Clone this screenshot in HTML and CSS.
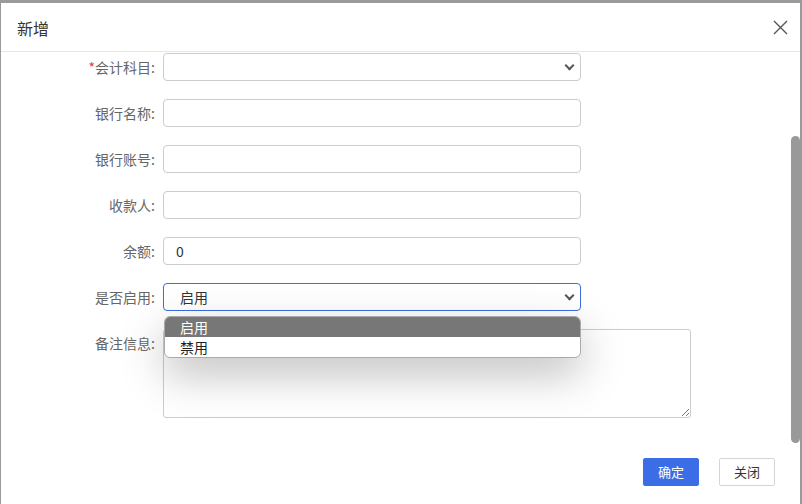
FILE: index.html
```html
<html>
<head>
<meta charset="utf-8">
<link rel="stylesheet" href="styles.css">
</head>
<body>
<div class="dialog">
  <div class="dlg-head">
    <div class="dlg-title">新增</div>
    <div class="dlg-close">
      <svg width="15" height="15" viewBox="0 0 15 15"><path d="M1 1 L14 14 M14 1 L1 14" stroke="#555" stroke-width="1.4" fill="none"/></svg>
    </div>
  </div>

  <div class="dlg-body">
    <div class="row">
      <div class="label"><span class="req">*</span>会计科目:</div>
      <div class="field"><div class="sel"><span></span><i class="arrow"></i></div></div>
    </div>
    <div class="row">
      <div class="label">银行名称:</div>
      <div class="field"><div class="inp"></div></div>
    </div>
    <div class="row">
      <div class="label">银行账号:</div>
      <div class="field"><div class="inp"></div></div>
    </div>
    <div class="row">
      <div class="label">收款人:</div>
      <div class="field"><div class="inp"></div></div>
    </div>
    <div class="row">
      <div class="label">余额:</div>
      <div class="field"><div class="inp">0</div></div>
    </div>
    <div class="row">
      <div class="label">是否启用:</div>
      <div class="field">
        <div class="sel focus"><span>启用</span><i class="arrow"></i></div>
        <div class="drop">
          <div class="opt on">启用</div>
          <div class="opt">禁用</div>
        </div>
      </div>
    </div>
    <div class="row row-text">
      <div class="label">备注信息:</div>
      <div class="field"><div class="area"><i class="grip"></i></div></div>
    </div>

    <div class="btns">
      <div class="btn btn-ok">确定</div>
      <div class="btn">关闭</div>
    </div>
  </div>

  <div class="scroll-thumb"></div>
</div>
</body>
</html>
```

FILE: styles.css
```css
body
{
  margin:0;
  padding:0;
  background-color:#9a9a9a;
  font-family:"Noto Sans CJK SC", "Noto Sans", sans-serif;
}

.dialog
{
  position:relative;
  margin:3px 0 0 1px;
  width:799px;
  height:501px;
  background-color:#fff;
  overflow:hidden;
}

.dlg-head
{
  height:49px;
  border-bottom:1px solid #e6e6e6;
  display:flex;
  align-items:center;
  justify-content:space-between;
  box-sizing:border-box;
  padding:0 12px 0 16px;
}

.dlg-title
{
  font-size:16px;
  color:#333;
  padding-top:2px;
}

.dlg-close
{
  width:15px;
  height:15px;
}

.dlg-body
{
  padding-top:1px;
}

.row
{
  display:grid;
  grid-template-columns:154px 1fr;
  column-gap:8px;
  margin-bottom:18px;
}

.label
{
  font-size:14px;
  color:#666;
  text-align:right;
  line-height:28px;
}

.req
{
  color:#e4393c;
}

.field
{
  position:relative;
}

.inp, .sel
{
  width:418px;
  height:28px;
  box-sizing:border-box;
  border:1px solid #ccc;
  border-radius:4px;
  font-size:14px;
  color:#333;
  line-height:26px;
  padding-left:12px;
}

.sel
{
  display:flex;
  justify-content:space-between;
  align-items:center;
  padding:0 7px 0 16px;
}

.sel.focus
{
  border-color:#3d6de0;
}

.arrow
{
  width:5px;
  height:5px;
  border-right:2px solid #555;
  border-bottom:2px solid #555;
  transform:rotate(45deg);
  margin-top:-4px;
}

.drop
{
  position:absolute;
  left:1px;
  top:33px;
  width:417px;
  box-sizing:border-box;
  border:1px solid #aaa;
  border-radius:6px;
  background-color:#fff;
  overflow:hidden;
  box-shadow:0 16px 44px rgba(0,0,0,0.26);
  z-index:2;
}

.opt
{
  height:20px;
  line-height:20px;
  font-size:14px;
  color:#222;
  padding-left:15px;
}

.opt.on
{
  background-color:#777;
  color:#fff;
}

.area
{
  position:relative;
  width:528px;
  height:89px;
  box-sizing:border-box;
  border:1px solid #ccc;
  border-radius:3px;
}

.grip
{
  position:absolute;
  right:1px;
  bottom:1px;
  width:7px;
  height:7px;
  background:linear-gradient(135deg, transparent 45%, #777 45%, #777 55%, transparent 55%, transparent 75%, #777 75%, #777 85%, transparent 85%);
}

.btns
{
  display:flex;
  justify-content:flex-end;
  gap:20px;
  padding:22px 25px 0 0;
}

.btn
{
  width:56px;
  height:28px;
  box-sizing:border-box;
  border:1px solid #d5d5d5;
  border-radius:2px;
  font-size:13px;
  color:#333;
  text-align:center;
  line-height:26px;
  background-color:#fff;
}

.btn-ok
{
  background-color:#3b6de6;
  border-color:#3b6de6;
  color:#fff;
}

.scroll-thumb
{
  position:absolute;
  left:790px;
  top:133px;
  width:9px;
  height:307px;
  border-radius:5px;
  background-color:#999;
}
```
